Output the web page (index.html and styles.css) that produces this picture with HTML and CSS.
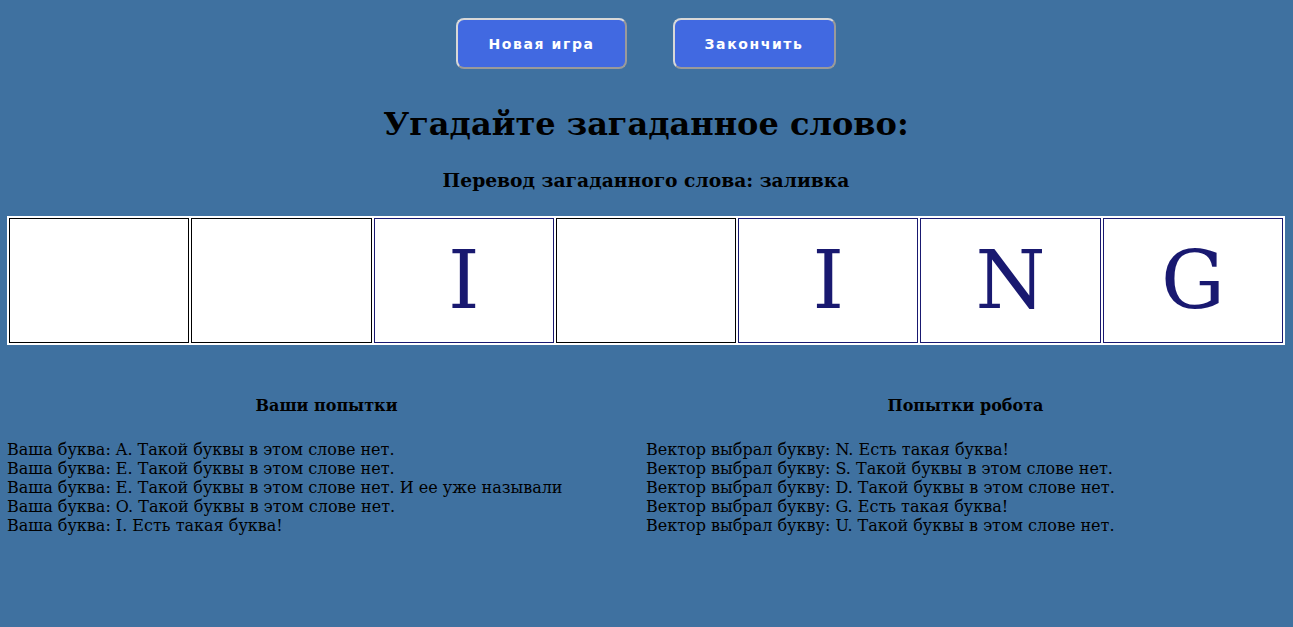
FILE: index.html
```html
<!DOCTYPE html>
<html lang="ru">
<head>
<meta charset="utf-8">
<title>Угадайте слово</title>
<link rel="stylesheet" href="styles.css">
</head>
<body>
<div class="controls">
  <button class="btn btn-new">Новая игра</button>
  <button class="btn btn-end">Закончить</button>
</div>
<h1 class="title">Угадайте загаданное слово:</h1>
<h3 class="subtitle">Перевод загаданного слова: заливка</h3>
<table class="word">
  <tr>
    <td class="cell empty"></td>
    <td class="cell empty"></td>
    <td class="cell">I</td>
    <td class="cell empty"></td>
    <td class="cell">I</td>
    <td class="cell">N</td>
    <td class="cell">G</td>
  </tr>
</table>
<div class="logs">
  <div class="log">
    <h4 class="log-title">Ваши попытки</h4>
    <div class="log-lines">
      <div>Ваша буква: A. Такой буквы в этом слове нет.</div>
      <div>Ваша буква: E. Такой буквы в этом слове нет.</div>
      <div>Ваша буква: E. Такой буквы в этом слове нет. И ее уже называли</div>
      <div>Ваша буква: O. Такой буквы в этом слове нет.</div>
      <div>Ваша буква: I. Есть такая буква!</div>
    </div>
  </div>
  <div class="log">
    <h4 class="log-title">Попытки робота</h4>
    <div class="log-lines">
      <div>Вектор выбрал букву: N. Есть такая буква!</div>
      <div>Вектор выбрал букву: S. Такой буквы в этом слове нет.</div>
      <div>Вектор выбрал букву: D. Такой буквы в этом слове нет.</div>
      <div>Вектор выбрал букву: G. Есть такая буква!</div>
      <div>Вектор выбрал букву: U. Такой буквы в этом слове нет.</div>
    </div>
  </div>
</div>
</body>
</html>
```
FILE: styles.css
```css
html, body {
  background: #3f71a0;
}
body {
  margin: 8px 8px 8px 7px;
  font-family: "DejaVu Serif", serif;
  font-size: 16px;
  color: #000;
}
.controls {
  display: flex;
  justify-content: center;
  gap: 46px;
  padding-top: 10px;
}
.btn {
  height: 51px;
  padding: 0 30px;
  background: #4169e1;
  color: #fff;
  border: 2px solid;
  border-color: #d8d8d8 #9a9a9a #9a9a9a #d8d8d8;
  border-radius: 8px;
  font-family: "DejaVu Sans", sans-serif;
  font-weight: bold;
  font-size: 14px;
  letter-spacing: 1.6px;
}
.title {
  text-align: center;
  font-size: 32px;
  margin: 36px 0 0;
}
.subtitle {
  text-align: center;
  font-size: 18.72px;
  margin: 26px 0 0;
}
.word {
  width: 100%;
  margin-top: 25px;
  background: #fff;
  border-spacing: 2px;
  table-layout: fixed;
}
.cell {
  height: 123px;
  border: 1px solid #191970;
  text-align: center;
  vertical-align: middle;
  color: #191970;
  font-size: 80px;
  padding: 0;
}
.cell.empty {
  border-color: #000;
}
.logs {
  display: flex;
  margin-top: 51px;
}
.log {
  flex: 1;
}
.log-title {
  text-align: center;
  font-size: 16px;
  margin: 0 0 25px;
}
.log-lines {
  line-height: 19px;
}
```
